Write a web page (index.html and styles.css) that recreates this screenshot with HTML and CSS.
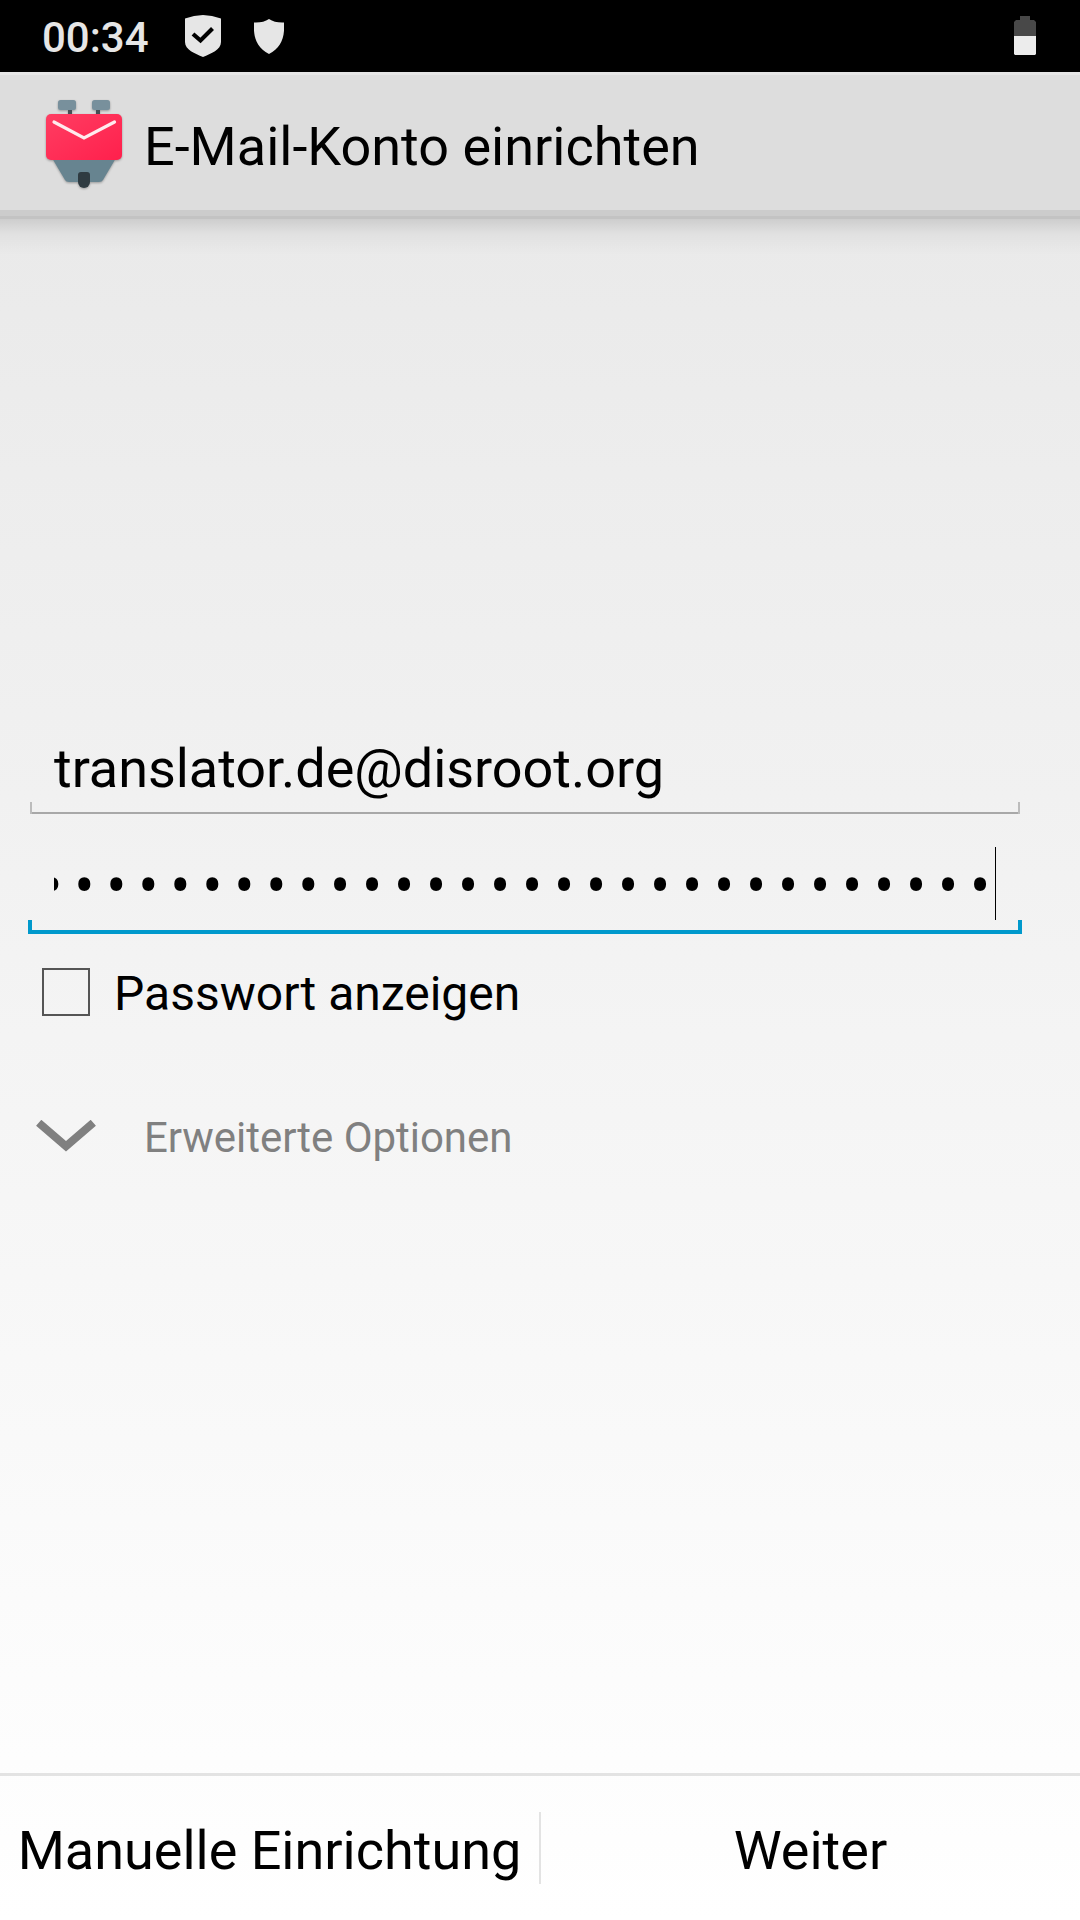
FILE: index.html
```html
<!DOCTYPE html>
<html lang="de">
<head>
<meta charset="utf-8">
<title>E-Mail-Konto einrichten</title>
<link rel="stylesheet" href="styles.css">
</head>
<body>
<header class="status">
  <span class="clock">00:34</span>
  <svg class="shield-check" width="36" height="42" viewBox="0 0 36 42"><path fill="#e6e6e6" d="M0 3.5Q18-3.500 36 3.500V27C36 35 26 38.500 18 42C10 38.500 0 35 0 27Z"/><path d="M8 19L15.500 25.500L27.500 13.500" fill="none" stroke="#000" stroke-width="4.200"/></svg>
  <svg class="shield" width="30" height="35" viewBox="0 0 30 35"><path fill="#e6e6e6" d="M0 3.500Q9 4 15 0Q21 4 30 3.500C31 19 27 29 15 35C3 29-1 19 0 3.500Z"/></svg>
  <svg class="battery" width="22" height="39" viewBox="0 0 22 39"><path fill="#484848" d="M6 0H16V4H20L22 6V20H0V6L2 4H6Z"/><path fill="#ececec" d="M0 20H22V38L21 39H1L0 38Z"/></svg>
</header>
<div class="action-bar">
  <svg class="logo" width="84" height="96" viewBox="0 0 84 96">
    <defs><linearGradient id="red" x1="0" y1="0" x2="1" y2="1"><stop offset="0" stop-color="#ff3d62"/><stop offset="1" stop-color="#ff204c"/></linearGradient></defs>
    <path fill="#454f55" d="M26 13h4v7h-4zM54 13h4v7h-4z"/>
    <rect x="16" y="4" width="18" height="10" rx="2.500" fill="#78909c"/>
    <rect x="50" y="4" width="18" height="10" rx="2.500" fill="#78909c"/>
    <path fill="#678490" d="M10 62H74L61 84Q60 86 57 86H27Q24 86 23 84Z"/>
    <path fill="#2f3b41" d="M36 79Q36 76 39 76H45Q48 76 48 79V86A6 6 0 0 1 36 86Z"/>
    <rect x="4" y="18" width="76" height="46" rx="5" fill="url(#red)"/>
    <path d="M12 26L42 42L72.500 26" fill="none" stroke="#ffebee" stroke-width="3.200" stroke-linecap="round"/>
  </svg>
  <h1 class="title">E-Mail-Konto einrichten</h1>
</div>
<main class="form">
  <div class="field email">translator.de@disroot.org</div>
  <div class="field password"><span class="mask"><span class="dots">••••••••••••••••••••••••••••••</span></span><span class="caret"></span></div>
  <label class="show-password"><span class="box"></span><span class="label">Passwort anzeigen</span></label>
  <div class="advanced">
    <svg width="60" height="32" viewBox="0 0 60 32"><path d="M2.700 2.800L30 26.300L57.300 2.800" fill="none" stroke="#808080" stroke-width="8"/></svg>
    <span>Erweiterte Optionen</span>
  </div>
</main>
<footer class="buttons">
  <div class="button">Manuelle Einrichtung</div>
  <div class="divider"></div>
  <div class="button">Weiter</div>
</footer>
</body>
</html>
```
FILE: styles.css
```css
* { box-sizing: border-box; }
body {
  margin: 0;
  width: 1080px;
  height: 1920px;
  display: flex;
  flex-direction: column;
  overflow: hidden;
  font-family: Roboto, sans-serif;
  font-size: 54px;
  line-height: 64px;
  color: #000;
  background: linear-gradient(#e8e8e8, #fff) 0 72px / 100% 1848px no-repeat;
}
.status {
  height: 72px;
  flex: none;
  display: flex;
  align-items: flex-start;
  padding: 15px 44px 0 42px;
  background: #000;
}
.clock {
  width: 143px;
  padding-top: 1px;
  font-size: 42px;
  line-height: 44px;
  font-weight: 500;
  color: #e6e6e6;
}
.shield { margin: 4px 0 0 33px; }
.battery { margin: 1px 0 0 auto; }
.action-bar {
  height: 147px;
  flex: none;
  display: flex;
  align-items: flex-start;
  padding: 21px 0 0 42px;
  background: #ddd;
  border-top: 3px solid #e6e6e6;
  box-shadow: inset 0 -3px #c3c3c3, inset 0 -9px #ccc;
}
.logo {
  flex: none;
  filter: drop-shadow(0 1px 1px rgba(0, 0, 0, .3));
}
.title {
  margin: 19px 0 0 18px;
  font-size: 54px;
  font-weight: 400;
}
.form {
  flex: 1;
  padding: 518px 58px 0 28px;
  background: linear-gradient(rgba(0, 0, 0, .12), rgba(0, 0, 0, .04) 15px, transparent 36px) 0 0 / 100% 36px no-repeat;
}
.field {
  position: relative;
  padding: 0 26px;
}
.email {
  height: 77px;
  margin: 0 2px;
  padding: 0 24px;
  border-bottom: 2px solid #a8a8a8;
  letter-spacing: -.04px;
}
.field::before,
.field::after {
  content: "";
  position: absolute;
  width: 2px;
  height: 12px;
  bottom: -2px;
  background: #bcbcbc;
}
.field::before { left: 0; }
.field::after { right: 0; }
.password {
  display: flex;
  height: 120px;
  padding-top: 33px;
  border-bottom: 4px solid #0099cc;
}
.password::before,
.password::after {
  width: 4px;
  height: 14px;
  bottom: -4px;
  background: #0099cc;
}
.mask {
  display: flex;
  justify-content: flex-end;
  width: 941px;
  padding-top: 7px;
  overflow: hidden;
}
.dots {
  height: 64px;
  margin-right: -7px;
  font-size: 60px;
  letter-spacing: 11.750px;
  transform: scaleY(1.08);
}
.caret {
  width: 1px;
  height: 73px;
  background: #000;
}
.show-password {
  display: flex;
  align-items: center;
  margin: 26px 0 0 14px;
  font-size: 48px;
}
.label { padding-top: 2px; margin-bottom: -2px; }
.box {
  width: 48px;
  height: 48px;
  margin-right: 24px;
  border: 2px solid #555;
}
.advanced {
  display: flex;
  align-items: flex-start;
  margin: 81px 0 0 8px;
  font-size: 42px;
  letter-spacing: -.05px;
  color: #808080;
}
.advanced svg { margin-top: 15px; }
.advanced span { margin: 1px 0 0 48px; }
.buttons {
  height: 147px;
  flex: none;
  display: flex;
  border-top: 3px solid #e3e3e3;
}
.button {
  flex: 1;
  padding-top: 43px;
  text-align: center;
  white-space: nowrap;
}
.divider {
  width: 2px;
  height: 72px;
  margin-top: 36px;
  background: #e3e3e3;
}
```
